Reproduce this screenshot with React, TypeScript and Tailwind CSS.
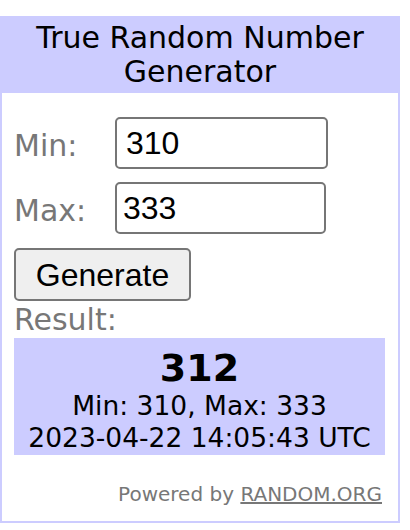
import { useState } from 'react'

const VERDANA = '[font-family:Verdana,"DejaVu_Sans",sans-serif]'

export default function App() {
  const [min, setMin] = useState('310')
  const [max, setMax] = useState('333')
  const [result] = useState({
    value: 312,
    min: 310,
    max: 333,
    ts: '2023-04-22 14:05:43 UTC',
  })

  return (
    <div className="min-h-screen bg-white pt-[16px]">
      <div className={`w-[400px] h-[507px] border-2 border-[#ccccff] flex flex-col ${VERDANA}`}>
        {/* Title bar */}
        <div className="bg-[#ccccff] text-center text-[30px] leading-[34px] text-black pt-[3px] pb-[4px]">
          True Random Number
          <br />
          Generator
        </div>

        <div className="flex flex-col px-[12px] pt-[24px]">
          <div className="flex items-center">
            <label className="w-[101px] text-[30px] text-[#777777] mt-[5px]">Min:</label>
            <input
              value={min}
              onChange={(e) => setMin(e.target.value)}
              className="w-[213px] h-[52px] border-2 border-[#767676] rounded-[5px] pl-[9px] text-[32px] text-black [font-family:Arial,'Liberation_Sans',sans-serif] outline-none"
            />
          </div>
          <div className="flex items-center mt-[13px]">
            <label className="w-[101px] text-[30px] text-[#777777] mt-[5px]">Max:</label>
            <input
              value={max}
              onChange={(e) => setMax(e.target.value)}
              className="w-[211px] h-[52px] border-2 border-[#767676] rounded-[5px] pl-[6px] text-[32px] text-black [font-family:Arial,'Liberation_Sans',sans-serif] outline-none"
            />
          </div>

          <button className="mt-[14px] self-start w-[177px] h-[53px] bg-[#efefef] border-2 border-[#767676] rounded-[5px] text-[32px] text-black [font-family:Arial,'Liberation_Sans',sans-serif]">
            Generate
          </button>

          <div className="text-[30px] leading-[34px] text-[#777777] mt-[2px]">Result:</div>

          {/* Result panel */}
          <div className="mt-[1px] w-[371px] h-[117px] bg-[#ccccff] text-center text-black flex flex-col items-center pt-[8px]">
            <div className="text-[38px] leading-[44px] font-bold">{result.value}</div>
            <div className="text-[26.5px] leading-[32px]">
              Min: {result.min}, Max: {result.max}
            </div>
            <div className="text-[26.5px] leading-[32px]">{result.ts}</div>
          </div>
        </div>

        <div className="mt-auto pb-[12px] pr-[16px] text-right text-[20px] text-[#777777]">
          Powered by{' '}
          <a href="#" className="underline text-[#777777]">
            RANDOM.ORG
          </a>
        </div>
      </div>
    </div>
  )
}
